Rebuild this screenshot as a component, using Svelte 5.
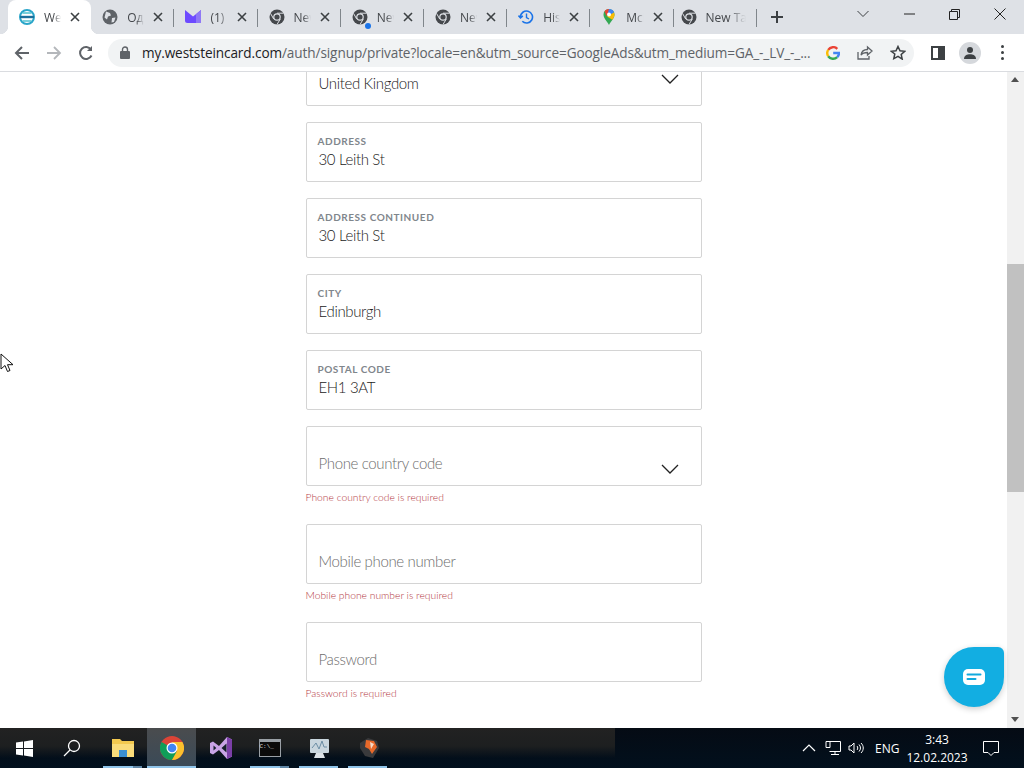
<script>
  const tabs = [
    { icon: "site", title: "Wes", active: true },
    { icon: "globe", title: "Одн" },
    { icon: "proton", title: "(1) I" },
    { icon: "chrome", title: "New" },
    { icon: "chrome", title: "New", dot: true },
    { icon: "chrome", title: "New" },
    { icon: "history", title: "Hist" },
    { icon: "maps", title: "McD" },
    { icon: "chrome", title: "New Tab", last: true },
  ];

  const filled = [
    { label: "ADDRESS", value: "30 Leith St" },
    { label: "ADDRESS CONTINUED", value: "30 Leith St" },
    { label: "CITY", value: "Edinburgh" },
    { label: "POSTAL CODE", value: "EH1 3AT" },
  ];

  const missing = [
    { placeholder: "Phone country code", error: "Phone country code is required", select: true },
    { placeholder: "Mobile phone number", error: "Mobile phone number is required" },
    { placeholder: "Password", error: "Password is required" },
  ];
</script>

{#snippet chevron()}
  <svg class="chevron" width="18" height="10" viewBox="0 0 18 10">
    <path d="M1 1l8 8 8-8" fill="none" stroke="#222" stroke-width="1.3" />
  </svg>
{/snippet}

{#snippet favicon(kind)}
  {#if kind === "site"}
    <svg width="16" height="16" viewBox="0 0 16 16">
      <circle cx="8" cy="8" r="7" fill="none" stroke="#2aa5c9" stroke-width="2" />
      <path d="M1 8h14" stroke="#1b6f9c" stroke-width="2.4" />
      <path d="M3.5 4h9M3.5 12h9" stroke="#4cc0cf" stroke-width="1.6" />
    </svg>
  {:else if kind === "globe"}
    <svg width="16" height="16" viewBox="0 0 16 16">
      <circle cx="8" cy="8" r="7.5" fill="#5f6368" />
      <path d="M4 2.5l4 1.5 1 2.5-3 1-1 3-2.5-2zM10 9l3.5-.5-1.5 4.5-2.500.5z" fill="#dee1e6" />
    </svg>
  {:else if kind === "proton"}
    <svg width="16" height="16" viewBox="0 0 16 16">
      <path d="M0 1l8 6.500L16 1v10.500a2.500 2.500 0 0 1-2.500 2.500h-11A2.500 2.500 0 0 1 0 11.500z" fill="#6d4aff" />
      <path d="M11 5.200L16 1v13h-5z" fill="#8f78f5" />
    </svg>
  {:else if kind === "history"}
    <svg width="16" height="16" viewBox="0 0 16 16" fill="none" stroke="#1a73e8" stroke-width="1.6">
      <path d="M2.500 8a6 6 0 1 1 1.800 4.300" />
      <path d="M0.500 6.500L2.500 8.800 4.800 6.800" />
      <path d="M8.500 4.500V8.500l2.500 1.500" stroke-width="1.400" />
    </svg>
  {:else if kind === "maps"}
    <svg width="16" height="18" viewBox="0 0 16 18">
      <path d="M8 17C6 13 2.500 10.500 2.500 6.500a5.500 5.500 0 0 1 11 0C13.500 10.500 10 13 8 17z" fill="#34a853" />
      <path d="M3.500 3.300A5.500 5.500 0 0 1 8 1l1 3.500L5.500 8z" fill="#ea4335" />
      <path d="M8 1a5.500 5.500 0 0 1 5 3.300L9.800 7.500 7 4.500z" fill="#4285f4" />
      <path d="M13.500 6.500c0 2-1 3.700-2.200 5.300L6 8.500l7-4z" fill="#fbbc04" />
      <circle cx="8" cy="6.500" r="2" fill="#fff" />
    </svg>
  {:else}
    <svg width="16" height="16" viewBox="0 0 16 16">
      <circle cx="8" cy="8" r="7.500" fill="#45484c" />
      <circle cx="8" cy="8" r="3.800" fill="#dee1e6" />
      <circle cx="8" cy="8" r="2.600" fill="#45484c" />
      <path d="M8 4.200h6.500M4.700 10l-3.200-5.600M11.300 10L8 15.500" stroke="#dee1e6" stroke-width="1" />
    </svg>
  {/if}
{/snippet}

<div class="screen">
  <header class="chrome">
    <div class="tabstrip">
      {#each tabs as tab}
        <div class="tab" class:active={tab.active} class:last={tab.last}>
          <span class="fav">
            {@render favicon(tab.icon)}
            {#if tab.dot}<i class="dot"></i>{/if}
          </span>
          <span class="tab-title">{tab.title}</span>
          {#if !tab.last}
            <svg class="tab-close" width="10" height="10" viewBox="0 0 10 10">
              <path d="M1 1l8 8M9 1l-8 8" stroke="#3c4043" stroke-width="1.600" />
            </svg>
          {/if}
        </div>
      {/each}
      <svg class="new-tab" width="14" height="14" viewBox="0 0 14 14">
        <path d="M7 1v12M1 7h12" stroke="#3c4043" stroke-width="2" />
      </svg>
      <div class="window-btns">
        <svg width="14" height="10" viewBox="0 0 14 10"><path d="M1.500 2L7 7.500 12.500 2" fill="none" stroke="#3c4043" /></svg>
        <svg width="11" height="2" viewBox="0 0 11 2"><path d="M0 1h11" stroke="#222" /></svg>
        <svg width="11" height="11" viewBox="0 0 11 11" fill="none" stroke="#222"><path d="M.5 2.500h8v8h-8zM2.500 2.500v-2h8v8h-2" /></svg>
        <svg width="12" height="12" viewBox="0 0 12 12"><path d="M.5.500l11 11M11.500.500l-11 11" stroke="#222" /></svg>
      </div>
    </div>

    <div class="toolbar">
      <svg class="nav" width="16" height="16" viewBox="0 0 16 16" fill="none" stroke="#5f6368" stroke-width="2"><path d="M15 8H2M8 2L2 8l6 6" /></svg>
      <svg class="nav" width="16" height="16" viewBox="0 0 16 16" fill="none" stroke="#b4b7bb" stroke-width="1.800"><path d="M1 8h13M8 2l6 6-6 6" /></svg>
      <svg class="nav" width="16" height="16" viewBox="0 0 16 16" fill="none" stroke="#5f6368" stroke-width="2"><path d="M13.500 10.500A6 6 0 1 1 13 4.500" /><path d="M14 1v5h-5" fill="#5f6368" stroke="none" /></svg>
      <div class="omnibox">
        <svg width="10" height="13" viewBox="0 0 10 13"><rect y="5" width="10" height="8" rx="1" fill="#5f6368" /><path d="M2.500 5.500V3.500a2.500 2.500 0 0 1 5 0v2" fill="none" stroke="#5f6368" stroke-width="1.400" /></svg>
        <span class="url"><b>my.weststeincard.com</b>/auth/signup/private?locale=en&amp;utm_source=GoogleAds&amp;utm_medium=GA_-_LV_-_...</span>
        <svg class="g" width="14" height="14" viewBox="0 0 14 14" fill="none" stroke-width="2.400">
          <path d="M11.300 2.800A6 6 0 0 0 2.200 3.800" stroke="#ea4335" />
          <path d="M2.200 3.800a6 6 0 0 0 0 6.400" stroke="#fbbc05" />
          <path d="M2.200 10.200a6 6 0 0 0 9 1" stroke="#34a853" />
          <path d="M11.200 11.200A6 6 0 0 0 13 7H7.200" stroke="#4285f4" />
        </svg>
        <svg width="16" height="15" viewBox="0 0 16 15" fill="none" stroke="#5f6368" stroke-width="1.300"><path d="M1 7v7h11v-3" /><path d="M4 10c.5-3.500 3-5.500 6.500-5.500V2L15 6l-4.500 4V7.500C8 7.500 5.500 8 4 10z" /></svg>
        <svg width="16" height="15" viewBox="0 0 16 15" fill="none" stroke="#3c4043" stroke-width="1.500"><path d="M8 1.500l2 4.300 4.700.5-3.500 3.200 1 4.600L8 11.300 3.800 13.600l1-4.600L1.300 6.300 6 5.800z" /></svg>
      </div>
      <div class="panel-icon"><i></i></div>
      <div class="avatar">
        <svg width="14" height="14" viewBox="0 0 14 14" fill="#3c4043"><circle cx="7" cy="4" r="3" /><path d="M1 13c0-3.500 3-4.800 6-4.800s6 1.300 6 4.800z" /></svg>
      </div>
      <div class="kebab"><i></i><i></i><i></i></div>
    </div>
  </header>

  <div class="viewport">
    <main class="page">
      <div class="form">
        <div class="field select-field">
          <span class="value">United Kingdom</span>
          <span class="field-chevron top">{@render chevron()}</span>
        </div>

        {#each filled as f}
          <div class="field">
            <span class="label">{f.label}</span>
            <span class="value">{f.value}</span>
          </div>
        {/each}

        {#each missing as m}
          <div class="group">
            <div class="field">
              <span class="value placeholder">{m.placeholder}</span>
              {#if m.select}<span class="field-chevron">{@render chevron()}</span>{/if}
            </div>
            <div class="error">{m.error}</div>
          </div>
        {/each}
      </div>
    </main>

    <div class="scrollbar">
      <i class="arrow up"></i>
      <i class="thumb"></i>
      <i class="arrow down"></i>
    </div>

    <svg class="cursor" width="14" height="21" viewBox="0 0 14 21">
      <path d="M1 1v15l4-3.500 2.500 6 2.500-1-2.500-5.800H13z" fill="#fff" stroke="#111" stroke-width="1" />
    </svg>

    <button class="chat" aria-label="Chat">
      <svg width="22" height="16" viewBox="0 0 22 16">
        <rect width="22" height="16" rx="5" fill="#fff" />
        <path d="M4.500 5.500h13M4.500 10h8" stroke="#12a9dd" stroke-width="2" stroke-linecap="round" />
      </svg>
    </button>
  </div>

  <footer class="taskbar">
    <div class="ghost"></div>
    <div class="task start">
      <svg width="17" height="17" viewBox="0 0 17 17" fill="#fff"><path d="M0 2.500L7 1.500v6.500H0zM8 1.400L17 0v8H8zM0 9h7v6.500L0 14.500zM8 9h9v8l-9-1.400z" /></svg>
    </div>
    <div class="task search">
      <svg width="18" height="18" viewBox="0 0 18 18" fill="none" stroke="#fff" stroke-width="1.300"><circle cx="11" cy="7" r="5.500" /><path d="M7 11l-6 6" /></svg>
    </div>
    <div class="task open stacked">
      <svg width="22" height="18" viewBox="0 0 22 18"><path d="M0 0h8l2 2h12v16H0z" fill="#f3c94f" /><rect y="5" width="22" height="13" fill="#fadc7a" /><rect x="7" y="11" width="8" height="7" fill="#3b8fd0" /></svg>
    </div>
    <div class="task open current">
      <svg width="24" height="24" viewBox="0 0 24 24">
        <circle cx="12" cy="12" r="12" fill="#db4437" />
        <path d="M12 12L1.600 6A12 12 0 0 0 12 24l5-8z" fill="#0f9d58" />
        <path d="M12 6h10.400A12 12 0 0 1 12 24l5-9z" fill="#fbc02d" />
        <circle cx="12" cy="12" r="5.500" fill="#fff" />
        <circle cx="12" cy="12" r="4.300" fill="#4285f4" />
      </svg>
    </div>
    <div class="task">
      <svg width="24" height="24" viewBox="0 0 24 24">
        <path d="M1 7l3-1.500 6 4.500L18 1l5 2.500v17L18 23l-8-9-6 4.500L1 17z" fill="#c9a4e6" />
        <path d="M18 1l5 2.500v17L18 23z" fill="#7b3fa8" />
        <path d="M4.500 9.500v5l2.800-2.500zM17.500 7.500l-5 4.500 5 4.500z" fill="#16202c" />
      </svg>
    </div>
    <div class="task open stacked">
      <div class="cmd"><span>C:\_</span></div>
    </div>
    <div class="task open">
      <svg width="24" height="24" viewBox="0 0 24 24"><rect x="3" y="3" width="19" height="14" rx="1" fill="#c9d6de" /><path d="M5 12l4-5 3 6 3-8 2 6h3" fill="none" stroke="#6c8ea5" /><path d="M9 17h7l2 5H7z" fill="#dde3e8" /></svg>
    </div>
    <div class="task open">
      <svg class="flame" width="24" height="24" viewBox="0 0 24 24"><path d="M3 7l8-5 9 3 2 7-6 10-8-2-5-8z" fill="#3a3a3c" /><path d="M9 4l8 1 3 6-5 7-3-5-4-2z" fill="#e8692a" /><path d="M13 6l4 2-3 5z" fill="#f5d9c8" /></svg>
    </div>

    <div class="tray">
      <svg width="14" height="8" viewBox="0 0 14 8"><path d="M1 7l6-6 6 6" fill="none" stroke="#fff" stroke-width="1.200" /></svg>
      <svg class="tray-net" width="16" height="16" viewBox="0 0 16 16" fill="none" stroke="#fff"><path d="M4.500 1.500h11v10h-11M1 1.500h4v6H1zM10 11.500v3M6 14.500h8" /></svg>
      <svg class="tray-vol" width="16" height="14" viewBox="0 0 16 14" fill="none" stroke="#fff"><path d="M1 5v4h2l3 3V2L3 5zM9 5c1 1 1 3 0 4M11 3.500c2 2 2 5 0 7M13 2c3 3 3 7 0 10" /></svg>
      <span class="lang">ENG</span>
      <div class="clock"><span>3:43</span><span>12.02.2023</span></div>
      <svg class="notify" width="16" height="15" viewBox="0 0 16 15"><path d="M.5.500h15v11H11l-3 3-3-3H.5z" fill="none" stroke="#fff" /></svg>
    </div>
  </footer>
</div>

<style>
  :global(body) {
    margin: 0;
    font-family: "Segoe UI", "Open Sans", "Liberation Sans", sans-serif;
  }

  .screen {
    width: 1024px;
    height: 768px;
    display: flex;
    flex-direction: column;
    overflow: hidden;
    background: #fff;
  }

  /* browser chrome */
  .chrome {
    flex: none;
    height: 72px;
    box-sizing: border-box;
    border-bottom: 1px solid #dadce0;
  }

  .tabstrip {
    height: 34px;
    padding-left: 8px;
    display: flex;
    align-items: center;
    background: #dee1e6;
  }

  .tab {
    width: 83.2px;
    height: 34px;
    box-sizing: border-box;
    padding: 0 11px;
    display: flex;
    align-items: center;
    gap: 9px;
    position: relative;
    flex: none;
  }

  .tab::after {
    content: "";
    position: absolute;
    right: 0;
    top: 9px;
    height: 18px;
    width: 1px;
    background: #80868b;
  }

  .tab.active {
    background: #fff;
    border-radius: 8px 8px 0 0;
  }

  /* concave feet of the active tab */
  .tab.active::before,
  .tab.active::after {
    content: "";
    position: absolute;
    top: auto;
    bottom: 0;
    width: 8px;
    height: 8px;
  }

  .tab.active::before {
    left: -8px;
    background: radial-gradient(circle at 0 0, transparent 8px, #fff 8.500px);
  }

  .tab.active::after {
    right: -8px;
    background: radial-gradient(circle at 100% 0, transparent 8px, #fff 8.500px);
  }

  .tab.last {
    padding-left: 7px;
  }

  .tab.last .tab-title {
    padding-right: 10px;
  }

  .fav {
    position: relative;
    width: 16px;
    height: 18px;
    flex: none;
    display: flex;
    align-items: center;
  }

  .dot {
    position: absolute;
    right: -3px;
    bottom: -3px;
    width: 6px;
    height: 6px;
    border-radius: 50%;
    background: #1a73e8;
  }

  .tab-title {
    flex: 1;
    min-width: 0;
    overflow: hidden;
    white-space: nowrap;
    font-size: 12px;
    color: #45484c;
    -webkit-mask-image: linear-gradient(90deg, #000 55%, transparent);
    mask-image: linear-gradient(90deg, #000 55%, transparent);
  }

  .tab-close {
    flex: none;
  }

  .new-tab {
    margin-left: 13px;
  }

  .window-btns {
    margin-left: auto;
    padding-right: 18px;
    display: flex;
    align-items: center;
    gap: 34px;
    margin-top: -6px;
  }

  .toolbar {
    height: 37px;
    display: flex;
    align-items: center;
    padding-left: 14px;
    background: #fff;
  }

  .nav {
    flex: none;
    margin-right: 16px;
  }

  .omnibox {
    width: 806px;
    margin-left: -2px;
    height: 28px;
    box-sizing: border-box;
    padding: 0 8px 0 12px;
    border-radius: 14px;
    background: #f1f3f4;
    display: flex;
    align-items: center;
    gap: 12px;
    flex: none;
  }

  .url {
    flex: 1;
    min-width: 0;
    white-space: nowrap;
    overflow: hidden;
    font-size: 13.6px;
    color: #5f6368;
    letter-spacing: -0.1px;
  }

  .url b {
    font-weight: 400;
    color: #202124;
  }

  .g {
    margin-right: 5px;
  }

  .omnibox svg:last-child {
    margin-left: 5px;
  }

  .panel-icon {
    width: 14px;
    height: 14px;
    margin-left: 17px;
    box-sizing: border-box;
    border: 2px solid #3c4043;
    display: flex;
    justify-content: flex-end;
  }

  .panel-icon i {
    width: 5px;
    background: #3c4043;
  }

  .avatar {
    width: 22px;
    height: 22px;
    margin-left: 14px;
    border-radius: 50%;
    background: #d5d8dc;
    display: flex;
    align-items: center;
    justify-content: center;
  }

  .kebab {
    margin-left: 20px;
    display: flex;
    flex-direction: column;
    gap: 3px;
  }

  .kebab i {
    width: 3px;
    height: 3px;
    border-radius: 50%;
    background: #3c4043;
  }

  /* page content */
  .viewport {
    flex: 1;
    min-height: 0;
    display: flex;
    position: relative;
    overflow: hidden;
  }

  .page {
    flex: 1;
    min-width: 0;
    background: #fff;
  }

  .form {
    width: 396px;
    margin: -26px auto 0;
    display: flex;
    flex-direction: column;
    gap: 16px;
    font-family: "Lato", "Open Sans", sans-serif;
  }

  .group {
    display: flex;
    flex-direction: column;
  }

  .field {
    height: 60px;
    box-sizing: border-box;
    border: 1px solid #d4d4d4;
    border-radius: 2px;
    padding: 13px 12px 9px;
    display: flex;
    flex-direction: column;
    justify-content: flex-end;
    position: relative;
    background: #fff;
  }

  .label {
    font-size: 10px;
    line-height: 12px;
    font-weight: 700;
    letter-spacing: 0.55px;
    color: #7f868c;
    margin-bottom: 2px;
    margin-left: -1px;
  }

  .value {
    font-size: 15px;
    line-height: 20px;
    font-weight: 300;
    letter-spacing: -0.35px;
    color: #222;
    padding-bottom: 3px;
  }

  .placeholder {
    color: #6d6d6d;
    position: relative;
  }

  .field-chevron {
    position: absolute;
    right: 22px;
    top: 37px;
    line-height: 0;
  }

  .field-chevron.top {
    top: 27px;
  }

  .error {
    height: 22px;
    font-size: 10.3px;
    line-height: 22px;
    font-weight: 300;
    color: #b3363e;
  }

  .scrollbar {
    flex: none;
    width: 17px;
    background: #f1f1f1;
    position: relative;
  }

  .thumb {
    position: absolute;
    top: 192px;
    left: 0;
    width: 100%;
    height: 228px;
    background: #c1c1c1;
  }

  .arrow {
    position: absolute;
    left: 4px;
    width: 0;
    height: 0;
    border-left: 4px solid transparent;
    border-right: 4px solid transparent;
  }

  .arrow.up {
    top: 5px;
    border-bottom: 5px solid #505050;
  }

  .arrow.down {
    bottom: 6px;
    border-top: 5px solid #505050;
  }

  .cursor {
    position: absolute;
    left: 0;
    top: 281px;
  }

  .chat {
    position: absolute;
    left: 944px;
    top: 575px;
    width: 60px;
    height: 60px;
    padding: 0;
    border: 0;
    border-radius: 50% 6px 50% 50%;
    background: #12aee2;
    box-shadow: 0 2px 6px rgba(0, 0, 0, 0.2);
    display: flex;
    align-items: center;
    justify-content: center;
  }

  /* windows taskbar */
  .taskbar {
    flex: none;
    height: 40px;
    display: flex;
    position: relative;
    background: linear-gradient(180deg, #050b14 0%, #02101d 100%);
  }

  /* see-through grey of the window behind the bar */
  .ghost {
    position: absolute;
    left: 0;
    top: 0;
    width: 615px;
    height: 30px;
    background: linear-gradient(180deg, #222222 0%, #1d1f20 60%, rgba(2, 16, 29, 0) 100%);
  }

  .task {
    width: 49px;
    height: 40px;
    box-sizing: border-box;
    display: flex;
    align-items: center;
    justify-content: center;
    position: relative;
    flex: none;
  }

  .search {
    padding-right: 3px;
  }

  .flame {
    transform: translateX(1px);
  }

  .task.current {
    background: linear-gradient(180deg, #4a4c4e, #3a4a58);
  }

  .task.open::after {
    content: "";
    position: absolute;
    left: 5px;
    right: 5px;
    bottom: 0;
    height: 2px;
    background: #8fc4ea;
  }

  .task.stacked::after {
    background: linear-gradient(90deg, #8fc4ea 78%, #5f86a6 78%);
  }

  .task.current::after {
    left: 0;
    right: 0;
  }

  .cmd {
    width: 22px;
    height: 18px;
    box-sizing: border-box;
    border: 1px solid #9aa0a6;
    border-top-width: 3px;
    background: #0b0b0b;
    color: #ddd;
    font-size: 6px;
    line-height: 9px;
    font-family: "Liberation Mono", monospace;
  }

  .tray {
    margin-left: auto;
    display: flex;
    align-items: center;
    color: #fff;
    font-size: 12px;
    padding-right: 25px;
    position: relative;
  }

  .tray-net {
    margin-left: 9px;
  }

  .tray-vol {
    margin-left: 7px;
  }

  .lang {
    margin-left: 11px;
    width: 28px;
  }

  .clock {
    width: 68px;
    display: flex;
    flex-direction: column;
    align-items: center;
    line-height: 18px;
    padding-top: 1px;
  }

  .notify {
    margin-left: 12px;
  }
</style>
